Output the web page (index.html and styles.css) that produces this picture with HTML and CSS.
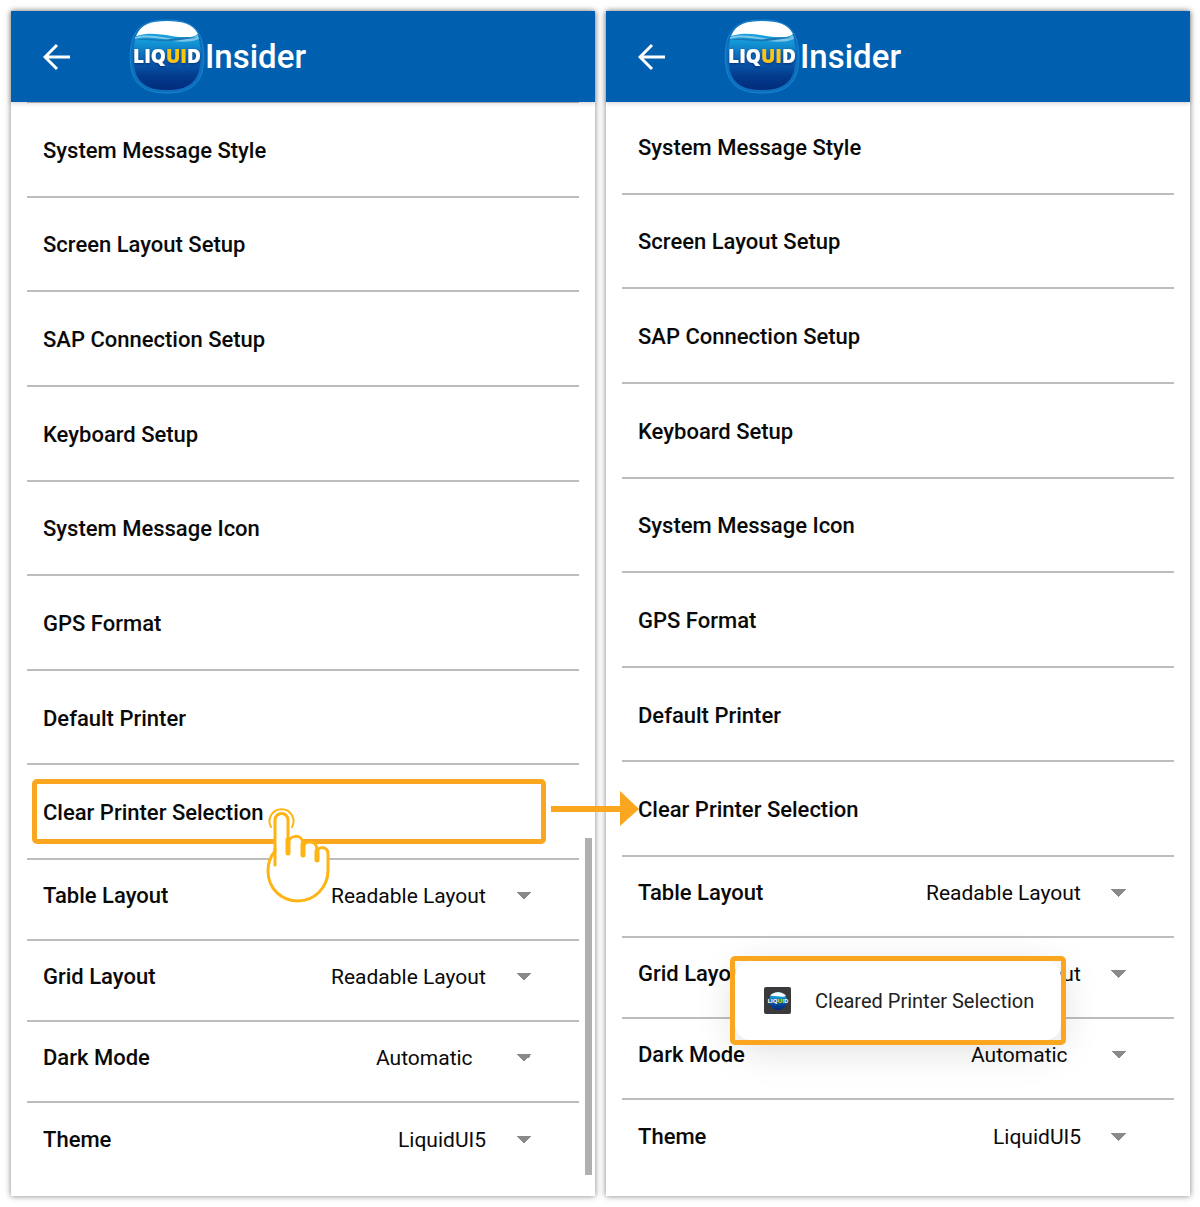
FILE: index.html
```html
<!DOCTYPE html>
<html lang="en">
    <head>
        <meta charset="UTF-8" />
        <meta name="viewport" content="width=device-width,initial-scale=1" />
        <title>Liquid Insider | Clear Printer Selection</title>
        <link rel="stylesheet" href="styles.css">
    </head>
    <body>
        <!-- shared logo artwork -->
        <svg class="defs" aria-hidden="true">
            <defs>
                <linearGradient id="water" x1="0" y1="0" x2="0" y2="1">
                    <stop offset="0" stop-color="#25b4e6" />
                    <stop offset="0.3" stop-color="#1396d6" />
                    <stop offset="0.56" stop-color="#0a5fb0" />
                    <stop offset="0.8" stop-color="#033a8c" />
                    <stop offset="1" stop-color="#032c7c" />
                </linearGradient>
                <filter id="textShadow" x="-10%" y="-20%" width="120%" height="150%">
                    <feDropShadow dx="0" dy="1" stdDeviation="1" flood-color="#03246b" flood-opacity="0.8" />
                </filter>
                <symbol id="logo" viewBox="0 0 76 76">
                    <path d="M38 1C58 1 69 7 73 22C75.500 33 75.500 43 73 53C69 68 57 74 38 74C19 74 7 68 3 53C.5 43 .5 33 3 22C7 7 18 1 38 1Z" fill="#0f6fbf" stroke="#1685d0" stroke-width="1" />
                    <path d="M38 3C56 3 67 8 70 22C73 33 72 43 70 52C66 66 55 71 38 71C21 71 10 66 6 52C4 43 3 33 6 22C9 8 20 3 38 3Z" fill="url(#water)" />
                    <path d="M7 17C12 5 22 2 38 2C54 2 64 5 69 15C66 18 58 19 50 18C38 17 24 12 7 17Z" fill="#fff" />
                    <path d="M6 18C20 14 35 19 48 20C56 21 65 19 69 16L70 20C60 24 48 23 39 21C27 19 17 17 6 20Z" fill="#7dc6e8" />
                    <path d="M6 21C18 18 30 22 41 20C52 18 61 18 69 19C58 19 50 22 42 22C30 23 17 20 6 21Z" fill="#1777b4" />
                    <text x="38" y="44" text-anchor="middle" class="logo-text" filter="url(#textShadow)">LIQ<tspan class="gold">UI</tspan>D</text>
                </symbol>
            </defs>
        </svg>

        <main class="screens">
            <section class="phone">
                <header class="topbar">
                    <button class="back" type="button" aria-label="Back">
                        <svg viewBox="0 0 28 28">
                            <path d="M27 14H3M14 2L2 14L14 26" />
                        </svg>
                    </button>
                    <svg class="logo"><use href="#logo" /></svg>
                    <h1>Insider</h1>
                </header>
                <ul class="settings">
                    <li>System Message Style</li>
                    <li>Screen Layout Setup</li>
                    <li>SAP Connection Setup</li>
                    <li>Keyboard Setup</li>
                    <li>System Message Icon</li>
                    <li>GPS Format</li>
                    <li>Default Printer</li>
                    <li class="target">
                        Clear Printer Selection
                        <span class="highlight"></span>
                        <svg class="pointer" viewBox="0 0 88 36">
                            <path d="M0 15H69V0L88 18L69 35V21H0Z" />
                        </svg>
                        <svg class="hand" viewBox="0 0 66 100">
                            <path class="palm" d="M10 47V16A6 6 0 0 1 23 16V40C24 30 37 30 38 39V43C40 36 51 36 52 45V48C54 41 63 43 63 50V66C63 84 49 97 33 97C16 97 3 84 3 67C3 58 5 53 10 47Z" />
                            <path class="palm" d="M10 45V61" />
                            <path class="ring" d="M6 23A12 12 0 1 1 27 23" />
                            <path class="fingers" d="M23 36V49M38 40V51M52 47V56" />
                        </svg>
                    </li>
                    <li class="option">
                        <label for="table1">Table Layout</label>
                        <select id="table1" class="wide"><option>Readable Layout</option></select>
                    </li>
                    <li class="option">
                        <label for="grid1">Grid Layout</label>
                        <select id="grid1" class="wide"><option>Readable Layout</option></select>
                    </li>
                    <li class="option">
                        <label for="dark1">Dark Mode</label>
                        <select id="dark1" class="medium"><option>Automatic</option></select>
                    </li>
                    <li class="option">
                        <label for="theme1">Theme</label>
                        <select id="theme1" class="narrow"><option>LiquidUI5</option></select>
                    </li>
                </ul>
                <div class="scrollbar"></div>
            </section>

            <section class="phone">
                <header class="topbar">
                    <button class="back" type="button" aria-label="Back">
                        <svg viewBox="0 0 28 28">
                            <path d="M27 14H3M14 2L2 14L14 26" />
                        </svg>
                    </button>
                    <svg class="logo"><use href="#logo" /></svg>
                    <h1>Insider</h1>
                </header>
                <ul class="settings scrolled">
                    <li>System Message Style</li>
                    <li>Screen Layout Setup</li>
                    <li>SAP Connection Setup</li>
                    <li>Keyboard Setup</li>
                    <li>System Message Icon</li>
                    <li>GPS Format</li>
                    <li>Default Printer</li>
                    <li>Clear Printer Selection</li>
                    <li class="option">
                        <label for="table2">Table Layout</label>
                        <select id="table2" class="wide"><option>Readable Layout</option></select>
                    </li>
                    <li class="option">
                        <label for="grid2">Grid Layout</label>
                        <select id="grid2" class="wide"><option>Readable Layout</option></select>
                    </li>
                    <li class="option">
                        <label for="dark2">Dark Mode</label>
                        <select id="dark2" class="medium"><option>Automatic</option></select>
                    </li>
                    <li class="option">
                        <label for="theme2">Theme</label>
                        <select id="theme2" class="narrow"><option>LiquidUI5</option></select>
                    </li>
                </ul>
                <div class="toast-frame">
                    <div class="toast" role="status">
                        <svg class="toast-icon" viewBox="0 0 28 28">
                            <rect width="27" height="27" rx="2" fill="#3a3a3c" />
                            <circle cx="14" cy="14" r="9" fill="url(#water)" />
                            <path d="M6 9C9 4 19 4 22 9C18 11 11 8 6 9Z" fill="#fff" />
                            <text x="14" y="16" text-anchor="middle" class="icon-text">LIQ<tspan fill="#fdc60a">UI</tspan>D</text>
                        </svg>
                        Cleared Printer Selection
                    </div>
                </div>
            </section>
        </main>
    </body>
</html>
```
FILE: styles.css
```css
:root {
    --blue: #0060af;
    --orange: #faa61f;
    --hand: #fdb414;
    --line: #bdbdbd;
    --arrow: #8a8a8a;
}
* {
    box-sizing: border-box;
}
body {
    margin: 0;
    background: #fff;
    font-family: Roboto, "Liberation Sans", sans-serif;
    font-size: 22px;
    line-height: 28px;
    color: #0a0a0a;
}
.defs {
    position: absolute;
    width: 0;
    height: 0;
}
.screens {
    display: grid;
    grid-template-columns: 1fr 1fr;
    gap: 11px;
    min-height: 100vh;
    padding: 11px 10px 11px 11px;
}
.phone {
    position: relative;
    display: flex;
    flex-direction: column;
    background: #fff;
    box-shadow: 0 0 6px rgba(0, 0, 0, 0.5);
}
/* the highlight arrow runs over the second screen */
.phone:first-child {
    z-index: 1;
}

/* top bar */
.topbar {
    position: relative;
    z-index: 1;
    display: flex;
    align-items: center;
    height: 91px;
    padding-left: 32px;
    background: var(--blue);
    color: #fff;
    box-shadow: 0 1px 5px rgba(0, 0, 0, 0.2);
}
.back {
    width: 28px;
    height: 28px;
    margin-right: 58px;
    padding: 0;
    border: none;
    background: none;
    cursor: pointer;
}
.back svg {
    display: block;
    fill: none;
    stroke: #fff;
    stroke-width: 3;
}
.logo {
    width: 76px;
    height: 76px;
}
.logo-text {
    font: 800 19px "Open Sans", sans-serif;
    fill: #fff;
}
.logo-text .gold {
    fill: #fdc60a;
}
h1 {
    margin: 0;
    font-size: 33px;
    line-height: 40px;
    font-weight: 500;
}

/* settings list */
.settings {
    flex: 1;
    display: flex;
    flex-direction: column;
    margin: 0;
    padding: 0 16px 12px;
    list-style: none;
}
.settings.scrolled {
    margin-top: -3px;
    padding-bottom: 15px;
}
.settings li {
    flex: 1;
    display: flex;
    align-items: center;
    min-height: 81px;
    padding: 3px 16px 0;
    border-bottom: 2px solid var(--line);
    font-weight: 500;
}
.settings li:first-child {
    border-top: 1px solid var(--line);
}
.settings .option {
    flex: none;
    justify-content: space-between;
    height: 81px;
    padding: 0 47px 8px 16px;
}
.settings li:last-child {
    border-bottom: none;
}
select {
    appearance: none;
    height: 40px;
    padding: 0;
    border: none;
    /* drop-down triangle */
    background:
        linear-gradient(to bottom right, var(--arrow) 50%, transparent 50%) right center / 8px 8px no-repeat,
        linear-gradient(to bottom left, var(--arrow) 50%, transparent 50%) right 8px center / 8px 8px no-repeat;
    font: inherit;
    font-size: 21px;
    font-weight: 400;
    color: inherit;
}
.wide {
    width: 201px;
}
.medium {
    width: 156px;
}
.narrow {
    width: 134px;
}
.scrollbar {
    position: absolute;
    right: 3px;
    bottom: 21px;
    width: 7px;
    height: 337px;
    background: #b0b0b0;
}

/* tap marker */
.settings .target {
    position: relative;
}
.highlight {
    position: absolute;
    top: 14px;
    right: 33px;
    bottom: 14px;
    left: 5px;
    border: 5px solid var(--orange);
    border-radius: 5px;
}
.pointer {
    position: absolute;
    top: 26px;
    right: -60px;
    width: 88px;
    height: 36px;
    fill: var(--orange);
}
.hand {
    position: absolute;
    top: 39px;
    left: 238px;
    width: 66px;
    height: 100px;
    fill: none;
    stroke: var(--hand);
    stroke-width: 3;
    stroke-linecap: round;
    stroke-linejoin: round;
}
.hand .palm {
    fill: #fff;
}
.hand .ring {
    stroke-width: 2;
}
.hand .fingers {
    stroke-width: 5;
}

/* toast */
.toast-frame {
    position: absolute;
    left: 124px;
    bottom: 151px;
    padding: 5px;
}
.toast-frame::after {
    content: "";
    position: absolute;
    inset: 0;
    border: 5px solid var(--orange);
    border-radius: 5px;
}
.toast {
    display: flex;
    align-items: center;
    gap: 23px;
    height: 79px;
    padding: 0 27px 0 29px;
    border-radius: 16px;
    background: #fff;
    box-shadow: 0 8px 40px rgba(0, 0, 0, 0.14);
    font-size: 20px;
    color: #222;
    white-space: nowrap;
}
.toast-icon {
    width: 28px;
    height: 28px;
}
.icon-text {
    font: 700 6px "Open Sans", sans-serif;
    fill: #fff;
}
```
